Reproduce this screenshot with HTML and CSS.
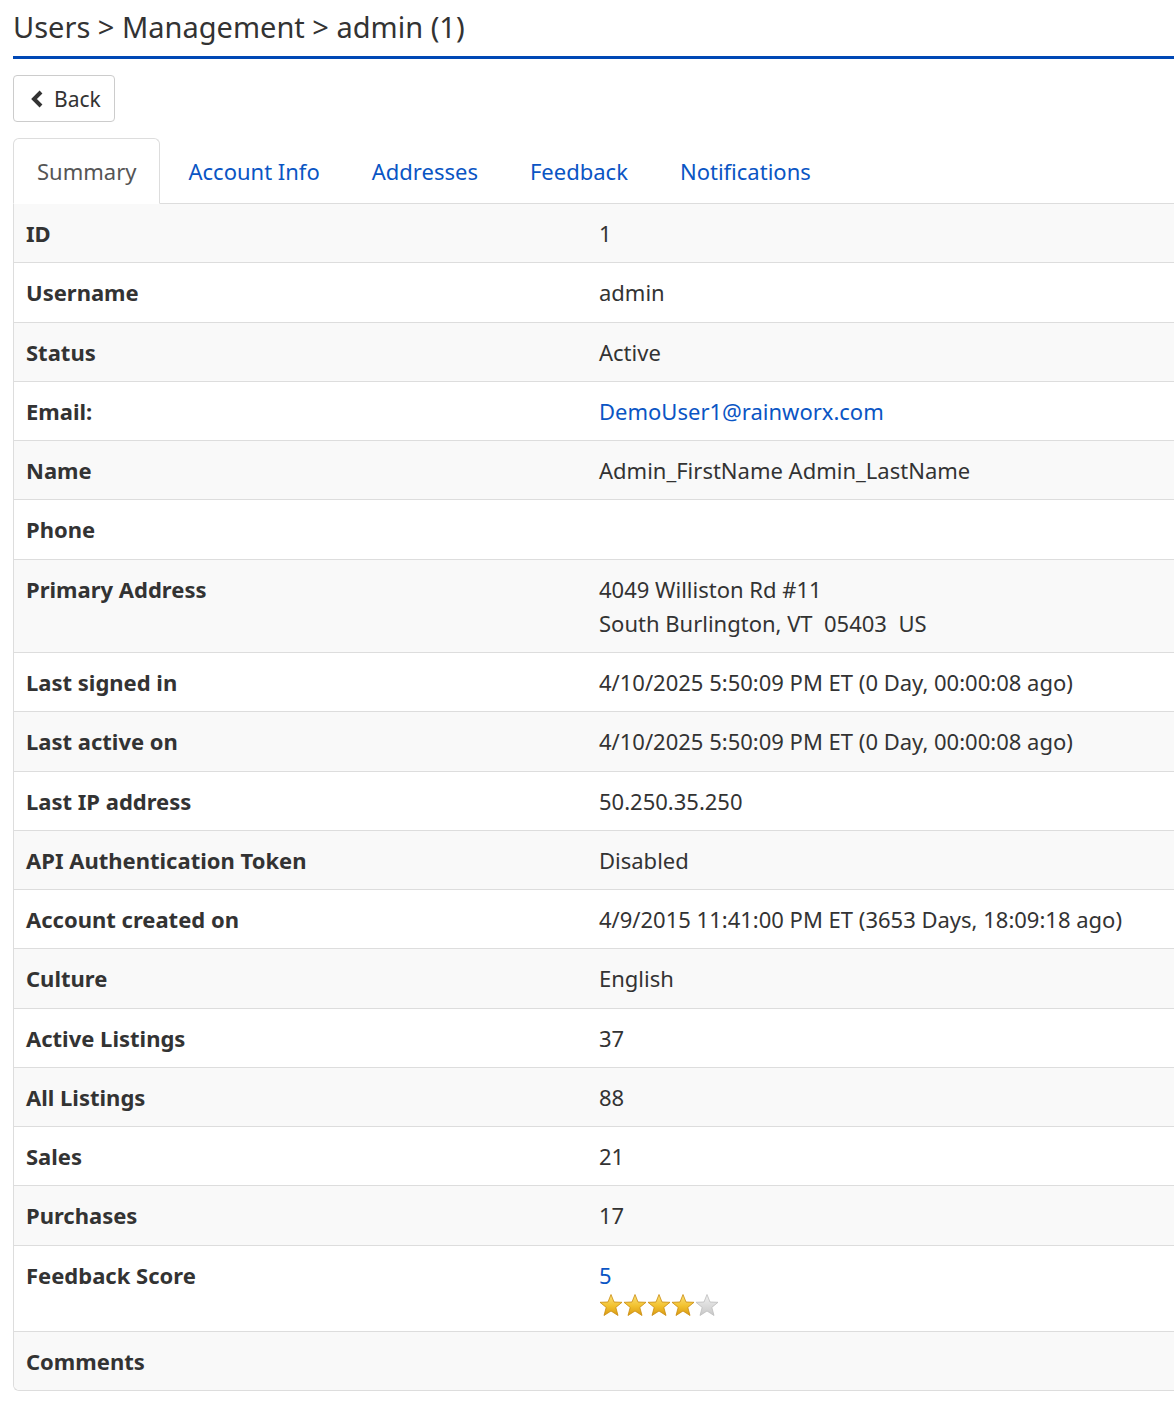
FILE: index.html
```html
<!DOCTYPE html>
<html lang="en">
<head>
    <meta charset="UTF-8">
    <title>Users &gt; Management &gt; admin (1)</title>
    <link rel="stylesheet" href="styles.css">
</head>
<body>
    <div class="page">
        <h1 class="page-title">Users &gt; Management &gt; admin (1)</h1>

        <a class="btn-back" href="#">
            <svg width="16" height="18" viewBox="0 0 16 18"><polyline points="11,2 4,9 11,16" fill="none" stroke="#333" stroke-width="4"/></svg>
            Back
        </a>

        <ul class="tabs">
            <li class="active"><a href="#">Summary</a></li>
            <li><a href="#">Account Info</a></li>
            <li><a href="#">Addresses</a></li>
            <li><a href="#">Feedback</a></li>
            <li><a href="#">Notifications</a></li>
        </ul>

        <table class="summary">
            <tr><th>ID</th><td>1</td></tr>
            <tr><th>Username</th><td>admin</td></tr>
            <tr><th>Status</th><td>Active</td></tr>
            <tr><th>Email:</th><td><a href="#">DemoUser1@rainworx.com</a></td></tr>
            <tr><th>Name</th><td>Admin_FirstName Admin_LastName</td></tr>
            <tr><th>Phone</th><td></td></tr>
            <tr><th>Primary Address</th><td>4049 Williston Rd #11<br>South Burlington, VT&nbsp; 05403&nbsp; US</td></tr>
            <tr><th>Last signed in</th><td>4/10/2025 5:50:09 PM ET (0 Day, 00:00:08 ago)</td></tr>
            <tr><th>Last active on</th><td>4/10/2025 5:50:09 PM ET (0 Day, 00:00:08 ago)</td></tr>
            <tr><th>Last IP address</th><td>50.250.35.250</td></tr>
            <tr><th>API Authentication Token</th><td>Disabled</td></tr>
            <tr><th>Account created on</th><td>4/9/2015 11:41:00 PM ET (3653 Days, 18:09:18 ago)</td></tr>
            <tr><th>Culture</th><td>English</td></tr>
            <tr><th>Active Listings</th><td>37</td></tr>
            <tr><th>All Listings</th><td>88</td></tr>
            <tr><th>Sales</th><td>21</td></tr>
            <tr><th>Purchases</th><td>17</td></tr>
            <tr>
                <th>Feedback Score</th>
                <td>
                    <a href="#">5</a><br>
                    <svg class="stars" width="122" height="28" viewBox="0 0 122 28">
                        <defs>
                            <linearGradient id="gold" x1="0" y1="0" x2="0" y2="1">
                                <stop offset="0" stop-color="#fbe27a"/>
                                <stop offset="0.55" stop-color="#f2c12e"/>
                                <stop offset="1" stop-color="#d99a12"/>
                            </linearGradient>
                            <linearGradient id="grey" x1="0" y1="0" x2="0" y2="1">
                                <stop offset="0" stop-color="#f0f0f0"/>
                                <stop offset="1" stop-color="#c8c8c8"/>
                            </linearGradient>
                            <path id="star" d="M12 1.5 L15 9 L23 9.3 L16.8 14.4 L19 22.5 L12 18 L5 22.5 L7.2 14.4 L1 9.3 L9 9 Z"/>
                        </defs>
                        <use href="#star" x="0" y="2" fill="url(#gold)" stroke="#c98a0c" stroke-width="0.8"/>
                        <use href="#star" x="24" y="2" fill="url(#gold)" stroke="#c98a0c" stroke-width="0.8"/>
                        <use href="#star" x="48" y="2" fill="url(#gold)" stroke="#c98a0c" stroke-width="0.8"/>
                        <use href="#star" x="72" y="2" fill="url(#gold)" stroke="#c98a0c" stroke-width="0.8"/>
                        <use href="#star" x="96" y="2" fill="url(#grey)" stroke="#bdbdbd" stroke-width="0.8"/>
                    </svg>
                </td>
            </tr>
            <tr><th>Comments</th><td></td></tr>
        </table>
    </div>
</body>
</html>
```

FILE: styles.css
```css
body {
    margin: 0;
    font-family: 'Noto Sans', 'Open Sans', sans-serif;
    font-size: 22px;
    color: #333;
    background: #fff;
    overflow-x: hidden;
}
.page {
    padding: 0 0 20px 13px;
}
.page-title {
    margin: 0;
    padding: 8px 0 11px;
    font-size: 29px;
    font-weight: 400;
    line-height: 37px;
    color: #333;
    border-bottom: 3px solid #0048b5;
}
.btn-back {
    display: inline-flex;
    align-items: center;
    gap: 8px;
    margin-top: 16px;
    height: 45px;
    padding: 0 13px 0 16px;
    border: 1px solid #ccc;
    border-radius: 4px;
    color: #333;
    font-size: 21px;
    text-decoration: none;
}
.tabs {
    display: flex;
    list-style: none;
    margin: 16px 0 0;
    padding: 0;
    border-bottom: 1px solid #ddd;
}
.tabs li {
    margin-right: 4px;
    margin-bottom: -1px;
}
.tabs a {
    display: block;
    padding: 0 23px;
    line-height: 64px;
    font-size: 22px;
    color: #0a55c4;
    text-decoration: none;
    border: 1px solid transparent;
    border-radius: 6px 6px 0 0;
}
.tabs li.active a {
    color: #555;
    background: #fff;
    border-color: #ddd #ddd #fff;
}
.summary {
    width: calc(100% + 20px);
    border-collapse: separate;
    border-spacing: 0;
    border-left: 1px solid #ddd;
    border-bottom: 1px solid #ddd;
    border-bottom-left-radius: 6px;
}
.summary th,
.summary td {
    padding: 12px 12px;
    line-height: 34.25px;
    text-align: left;
    vertical-align: top;
    border-top: 1px solid #ddd;
}
.summary tr:first-child th,
.summary tr:first-child td {
    border-top: none;
}
.summary th {
    width: 549px;
    font-weight: 700;
}
.summary tr:nth-child(odd) {
    background: #f9f9f9;
}
.summary tr:last-child th {
    border-bottom-left-radius: 6px;
}
.summary a {
    color: #0a55c4;
    text-decoration: none;
}
.stars {
    display: block;
    margin-top: -1px;
}
```
